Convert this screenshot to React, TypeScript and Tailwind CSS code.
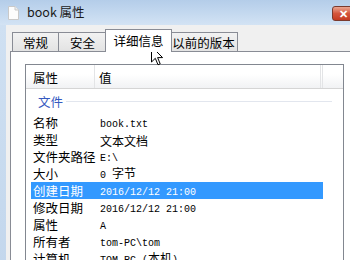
const cjk = '"Noto Sans CJK SC", "Noto Sans", sans-serif';

const rows: { label: string; value: string }[] = [
  { label: "名称", value: "book.txt" },
  { label: "类型", value: "文本文档" },
  { label: "文件夹路径", value: "E:\\" },
  { label: "大小", value: "0 字节" },
  { label: "创建日期", value: "2016/12/12 21:00" },
  { label: "修改日期", value: "2016/12/12 21:00" },
  { label: "属性", value: "A" },
  { label: "所有者", value: "tom-PC\\tom" },
  { label: "计算机", value: "TOM-PC (本机)" },
];

// ascii in a narrow mono, CJK in the ui font (like SimSun's half-width latin)
const Value = ({ text }: { text: string }) => {
  const parts = text.split(/([\u3400-\u9fff]+)/).filter(Boolean);
  return (
    <span className="whitespace-pre leading-[17px]">
      {parts.map((p, i) =>
        /[\u3400-\u9fff]/.test(p) ? (
          <span key={i} className="text-[12px] leading-[17px]" style={{ fontFamily: cjk }}>
            {p}
          </span>
        ) : (
          <span key={i} className="text-[10px] leading-[17px] font-['Liberation_Mono',monospace]">
            {p}
          </span>
        )
      )}
    </span>
  );
};

const DocIcon = () => (
  <svg width="13" height="14" viewBox="0 0 13 14">
    <path d="M1.5 0.5 H8 L11.5 4 V13.5 H1.5 Z" fill="#fdfdfd" stroke="#c9c9c9" />
    <path d="M8 0.5 V4 H11.5" fill="#eeeeee" stroke="#c9c9c9" />
  </svg>
);

const Cursor = () => (
  <svg width="13" height="20" viewBox="0 0 13 20">
    <path
      d="M0.5 0.5 L0.5 16 L4.3 12.3 L7 18.8 L9.2 17.8 L6.6 11.6 L11.6 11.6 Z"
      fill="#ffffff"
      stroke="#000000"
      strokeWidth="1"
      strokeLinejoin="round"
    />
  </svg>
);

const Tab = ({ label, active }: { label: string; active?: boolean }) =>
  active ? (
    <div className="relative z-10 -mx-[2px] mb-[-1px] flex h-[23px] items-start justify-center whitespace-nowrap border border-b-0 border-[#898c95] bg-white pt-[2px] text-[12.5px] leading-[17px] text-black">
      {label}
    </div>
  ) : (
    <div className="flex h-[19px] items-center justify-center whitespace-nowrap border border-l-0 border-b-0 border-[#898c95] bg-gradient-to-b from-[#f2f2f2] to-[#e3e3e3] text-[12.5px] leading-[17px] text-black">
      {label}
    </div>
  );

export default function App() {
  return (
    <div
      className="relative flex h-[260px] w-[350px] flex-col overflow-hidden bg-[#f0f0f0]"
      style={{ fontFamily: cjk }}
    >
      {/* title bar */}
      <div className="flex h-[25px] shrink-0 items-center bg-gradient-to-b from-[#b4cde9] via-[#c3d8ef] to-[#d3e3f4] pl-[7px]">
        <DocIcon />
        <span className="ml-[7px] text-[12.5px] text-[#1b1b1b]">book 属性</span>
        <div className="ml-auto mr-[-8px] mt-[2px] flex h-[15px] w-[26px] items-center justify-center rounded-[3px] border border-[#7a3a2e] bg-gradient-to-b from-[#e9a591] via-[#d4553c] to-[#c53a20] pr-[4px]">
          <span className="text-[11px] font-bold leading-none text-white">✕</span>
        </div>
      </div>

      <div className="flex flex-1">
        {/* aero frame */}
        <div className="w-[6px] bg-gradient-to-b from-[#cfe0f2] to-[#c2d6ec]" />

        <div className="flex flex-1 flex-col pl-[4px] pt-[4px]">
          {/* tabs */}
          <div className="flex h-[22px] items-end pl-[2px]">
            <div className="flex w-[47px] flex-col [&>div]:border-l">
              <Tab label="常规" />
            </div>
            <div className="flex w-[48px] flex-col">
              <Tab label="安全" />
            </div>
            <div className="flex w-[63px] flex-col">
              <Tab label="详细信息" active />
            </div>
            <div className="flex w-[68px] flex-col">
              <Tab label="以前的版本" />
            </div>
          </div>

          {/* tab panel */}
          <div className="mr-[-10px] flex-1 border border-[#898c95] bg-white pl-[14px] pt-[12px]">
            <div className="h-[220px] w-[319px] border border-[#828790] bg-white">
              {/* header */}
              <div className="flex h-[24px] border-b border-[#d5d5d5] bg-gradient-to-b from-white from-40% to-[#f1f2f4] text-[12.5px] leading-[17px] text-black">
                <div className="flex w-[69px] items-center border-r border-[#e3e4e6] pl-[7px] pt-[2px]">属性</div>
                <div className="flex w-[228px] items-center border-r-[3px] border-double border-[#e3e4e6] pl-[4px] pt-[2px]">值</div>
              </div>

              {/* group */}
              <div className="flex h-[25px] items-center pl-[12px]">
                <span className="text-[12.5px] leading-[17px] text-[#3559c0]">文件</span>
                <div className="ml-[3px] h-px w-[266px] bg-[#e2e6ee]" />
              </div>

              {/* rows */}
              {rows.map((r) => {
                const sel = r.label === "创建日期";
                return (
                  <div
                    key={r.label}
                    className={
                      sel
                        ? "ml-[5px] flex h-[17px] w-[292px] items-center bg-[#3399ff] text-white"
                        : "ml-[5px] flex h-[17px] w-[292px] items-center text-black"
                    }
                  >
                    <div className="w-[69px] shrink-0 pl-[2px] text-[12.5px] leading-[17px]">{r.label}</div>
                    <div className="leading-[17px]">
                      <Value text={r.value} />
                    </div>
                  </div>
                );
              })}
            </div>
          </div>
        </div>
      </div>

      {/* mouse pointer */}
      <div className="absolute left-[151px] top-[46px]">
        <Cursor />
      </div>
    </div>
  );
}
